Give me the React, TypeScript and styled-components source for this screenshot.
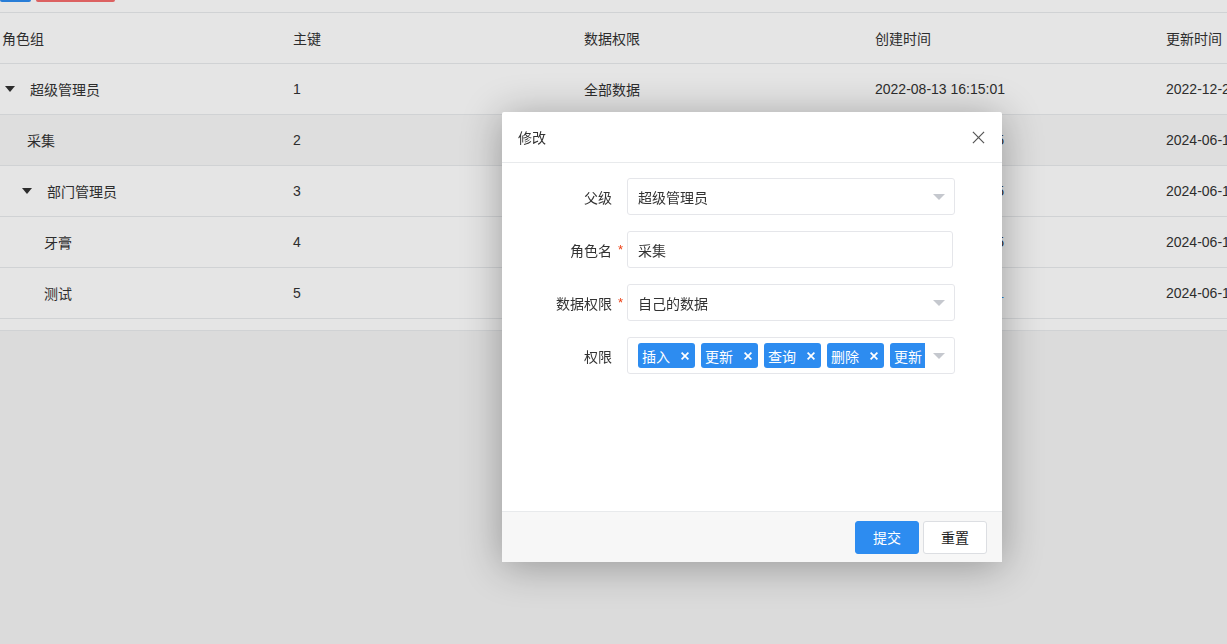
import React from "react";
import styled, { createGlobalStyle } from "styled-components";

const GlobalStyle = createGlobalStyle`
  html, body {
    margin: 0;
    padding: 0;
    height: 100%;
    overflow: hidden;
    background: #f4f4f4;
    font-family: "Liberation Sans", "Noto Sans CJK SC", sans-serif;
    font-size: 14px;
    color: #333;
  }
  #root { height: 100%; }
  * { box-sizing: border-box; }
`;

const Page = styled.div`
  position: relative;
  height: 100%;
  background: #f4f4f4;
`;

const Toolbar = styled.div`
  display: flex;
  gap: 5px;
  height: 12px;
  align-items: flex-start;
  background: #fff;
`;

const ToolButton = styled.div<{ $color: string; $w: number }>`
  width: ${(p) => p.$w}px;
  height: 2px;
  background: ${(p) => p.$color};
  border-radius: 0 0 3px 3px;
`;

const TableWrap = styled.div`
  width: 100%;
  overflow: hidden;
  background: #fff;
  border-top: 1px solid #e8eaec;
  border-bottom: 1px solid #e8eaec;
`;

const Grid = styled.div`
  width: 1460px;
`;

const Row = styled.div<{ $hover?: boolean }>`
  display: grid;
  grid-template-columns: 291px 291px 291px 291px 291px;
  height: 51px;
  align-items: center;
  border-bottom: 1px solid #e8eaec;
  background: ${(p) => (p.$hover ? "#f8f8f8" : "#fff")};
`;

const Cell = styled.div`
  padding-left: 2px;
  white-space: nowrap;
  overflow: hidden;
  display: flex;
  align-items: center;
  color: #333;
`;

const LinkTail = styled.span`
  color: #2d8cf0;
`;

const Indent = styled.span<{ $level: number }>`
  display: inline-block;
  width: ${(p) => p.$level * 17}px;
  flex: none;
`;

const Toggle = styled.span`
  width: 16px;
  margin-right: 12px;
  display: inline-flex;
  justify-content: center;
  flex: none;
`;

const LeafSpacer = styled.span`
  width: 8px;
  flex: none;
`;

const TableTail = styled.div`
  height: 11px;
`;

const Overlay = styled.div`
  position: fixed;
  inset: 0;
  background: rgba(0, 0, 0, 0.1);
`;

const Modal = styled.div`
  position: absolute;
  left: 502px;
  top: 112px;
  width: 500px;
  height: 450px;
  background: #fff;
  border-radius: 2px;
  box-shadow: 0 4px 40px rgba(0, 0, 0, 0.32);
  display: flex;
  flex-direction: column;
`;

const ModalHeader = styled.div`
  height: 51px;
  flex: none;
  display: flex;
  align-items: center;
  justify-content: space-between;
  padding: 0 17px 0 16px;
  border-bottom: 1px solid #e8eaec;
  color: #333;
`;

const CloseBtn = styled.span`
  display: inline-flex;
  width: 13px;
  height: 13px;
  cursor: pointer;
`;

const ModalBody = styled.div`
  flex: 1;
  padding: 15px 0 0 16px;
  display: flex;
  flex-direction: column;
  gap: 16px;
`;

const FormItem = styled.div`
  display: flex;
  align-items: center;
`;

const Label = styled.label`
  position: relative;
  width: 109px;
  padding-right: 15px;
  text-align: right;
  color: #333;
  flex: none;
`;

const Required = styled.span`
  position: absolute;
  right: 4px;
  top: 2px;
  color: #ed4014;
  font-size: 13px;
`;

const Field = styled.div<{ $w?: number }>`
  position: relative;
  width: ${(p) => p.$w ?? 328}px;
  height: 37px;
  border: 1px solid #e5e6ea;
  border-radius: 3px;
  background: #fff;
  display: flex;
  align-items: center;
  padding-left: 10px;
  color: #333;
`;

const Arrow = styled.span`
  position: absolute;
  right: 9px;
  top: 15px;
  width: 0;
  height: 0;
  border-left: 6px solid transparent;
  border-right: 6px solid transparent;
  border-top: 6px solid #c5c8ce;
`;

const Tags = styled.div`
  display: flex;
  gap: 6px;
  width: 287px;
  overflow: hidden;
  white-space: nowrap;
`;

const Tag = styled.span`
  flex: none;
  display: inline-flex;
  align-items: center;
  height: 25px;
  padding: 0 6px 0 4px;
  border-radius: 3px;
  background: #2d8cf0;
  color: #fff;
  font-size: 14px;
  gap: 11px;
`;

const TagClose = styled.span`
  display: inline-flex;
  width: 8px;
  height: 8px;
`;

const ModalFooter = styled.div`
  height: 51px;
  flex: none;
  border-top: 1px solid #e8eaec;
  background: #f7f7f7;
  display: flex;
  justify-content: flex-end;
  align-items: center;
  gap: 4px;
  padding: 0 15px 0 0;
`;

const Button = styled.button<{ $primary?: boolean }>`
  width: 64px;
  height: 33px;
  border-radius: 3px;
  font-family: inherit;
  font-size: 14px;
  cursor: pointer;
  border: 1px solid ${(p) => (p.$primary ? "#2d8cf0" : "#dcdee2")};
  background: ${(p) => (p.$primary ? "#2d8cf0" : "#fff")};
  color: ${(p) => (p.$primary ? "#fff" : "#222")};
`;

const Caret = () => (
  <svg width="10" height="6" viewBox="0 0 10 6">
    <path d="M0 0 H10 L5 6 Z" fill="#333" />
  </svg>
);

const XIcon = ({ color, w }: { color: string; w: number }) => (
  <svg width="100%" height="100%" viewBox="0 0 14 14">
    <path d="M1 1 L13 13 M13 1 L1 13" stroke={color} strokeWidth={w} strokeLinecap="butt" />
  </svg>
);

type RowData = {
  name: string;
  level: number;
  parent: boolean;
  id: string;
  scope: string;
  created: string;
  updated: string;
  hover?: boolean;
  link?: boolean;
};

const rows: RowData[] = [
  { name: "超级管理员", level: 0, parent: true, id: "1", scope: "全部数据", created: "2022-08-13 16:15:01", updated: "2022-12-23 10:12:31" },
  { name: "采集", level: 1, parent: false, id: "2", scope: "自己的数据", created: "2024-06-14 11:20:35", updated: "2024-06-14 11:20:35", hover: true },
  { name: "部门管理员", level: 1, parent: true, id: "3", scope: "本部门数据", created: "2024-06-14 11:21:05", updated: "2024-06-14 11:21:05" },
  { name: "牙膏", level: 2, parent: false, id: "4", scope: "自己的数据", created: "2024-06-14 11:22:45", updated: "2024-06-14 11:22:45" },
  { name: "测试", level: 2, parent: false, id: "5", scope: "自己的数据", created: "2024-06-14 11:23:11", updated: "2024-06-14 11:23:11", link: true },
];

const tags = ["插入", "更新", "查询", "删除", "更新"];

export default function App() {
  return (
    <>
      <GlobalStyle />
      <Page>
        <Toolbar>
          <ToolButton $color="#2d8cf0" $w={31} />
          <ToolButton $color="#f56c6c" $w={79} />
        </Toolbar>
        <TableWrap>
          <Grid>
            <Row>
              <Cell>角色组</Cell>
              <Cell>主键</Cell>
              <Cell>数据权限</Cell>
              <Cell>创建时间</Cell>
              <Cell>更新时间</Cell>
            </Row>
            {rows.map((r) => (
              <Row key={r.id} $hover={r.hover}>
                <Cell>
                  <Indent $level={r.level} />
                  {r.parent ? (
                    <Toggle>
                      <Caret />
                    </Toggle>
                  ) : (
                    <LeafSpacer />
                  )}
                  {r.name}
                </Cell>
                <Cell>{r.id}</Cell>
                <Cell>{r.scope}</Cell>
                <Cell>
                  {r.link ? (
                    <>
                      {r.created.slice(0, -1)}
                      <LinkTail>{r.created.slice(-1)}</LinkTail>
                    </>
                  ) : (
                    r.created
                  )}
                </Cell>
                <Cell>{r.updated}</Cell>
              </Row>
            ))}
            <TableTail />
          </Grid>
        </TableWrap>
        <Overlay />
        <Modal>
          <ModalHeader>
            <span>修改</span>
            <CloseBtn>
              <XIcon color="#555" w={1.3} />
            </CloseBtn>
          </ModalHeader>
          <ModalBody>
            <FormItem>
              <Label>父级</Label>
              <Field>
                超级管理员
                <Arrow />
              </Field>
            </FormItem>
            <FormItem>
              <Label>
                角色名<Required>*</Required>
              </Label>
              <Field $w={326}>采集</Field>
            </FormItem>
            <FormItem>
              <Label>
                数据权限<Required>*</Required>
              </Label>
              <Field>
                自己的数据
                <Arrow />
              </Field>
            </FormItem>
            <FormItem>
              <Label>权限</Label>
              <Field>
                <Tags>
                  {tags.map((t, i) => (
                    <Tag key={i}>
                      {t}
                      <TagClose>
                        <XIcon color="#fff" w={3} />
                      </TagClose>
                    </Tag>
                  ))}
                </Tags>
                <Arrow />
              </Field>
            </FormItem>
          </ModalBody>
          <ModalFooter>
            <Button $primary>提交</Button>
            <Button>重置</Button>
          </ModalFooter>
        </Modal>
      </Page>
    </>
  );
}
